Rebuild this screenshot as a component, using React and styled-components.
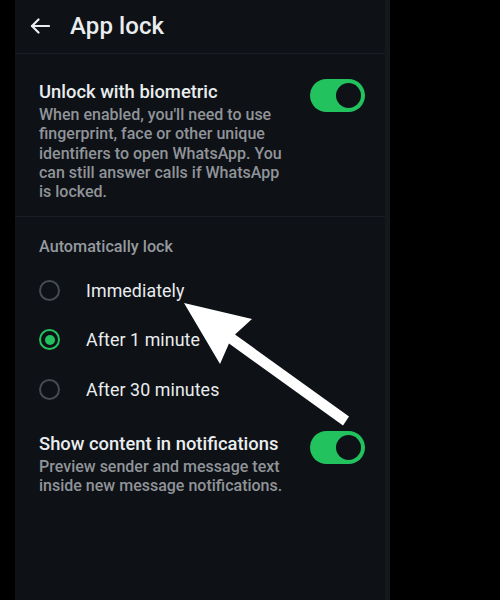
import React, {useState} from 'react'
import styled, {createGlobalStyle} from 'styled-components'

const GlobalStyle = createGlobalStyle`
    html, body {
        margin: 0;
        padding: 0;
        background: #000;
    }
    body {
        font-family: Roboto, "Noto Sans", "Liberation Sans", sans-serif;
        -webkit-font-smoothing: antialiased;
    }
`

const options = ['Immediately', 'After 1 minute', 'After 30 minutes']

function App() {
    const [biometric, setBiometric] = useState(true)
    const [showContent, setShowContent] = useState(true)
    const [lockAfter, setLockAfter] = useState(1)

    return (
        <Page>
            <GlobalStyle />
            <Screen>
                <Header>
                    <BackButton aria-label="Back">
                        <svg width="20" height="16" viewBox="0 0 20 16" fill="none">
                            <path d="M19 8H2" stroke="#e9edef" strokeWidth="2.2" strokeLinecap="round" />
                            <path d="M8.5 1.5L2 8l6.5 6.5" stroke="#e9edef" strokeWidth="2.2" strokeLinecap="round" strokeLinejoin="round" />
                        </svg>
                    </BackButton>
                    <Title>App lock</Title>
                </Header>

                <Section divided>
                    <SettingRow>
                        <SettingText>
                            <SettingTitle>Unlock with biometric</SettingTitle>
                            <SettingDesc>
                                When enabled, you'll need to use fingerprint, face or other unique identifiers to open WhatsApp. You can still answer calls if WhatsApp is locked.
                            </SettingDesc>
                        </SettingText>
                        <Toggle on={biometric} onClick={() => setBiometric(!biometric)} />
                    </SettingRow>
                </Section>

                <Section top={20}>
                    <GroupLabel>Automatically lock</GroupLabel>
                    <RadioList>
                        {options.map((opt, i) => (
                            <RadioRow key={opt} onClick={() => setLockAfter(i)}>
                                <Radio checked={lockAfter === i} />
                                <RadioLabel>{opt}</RadioLabel>
                            </RadioRow>
                        ))}
                    </RadioList>
                    <SettingRow>
                        <SettingText>
                            <SettingTitle>Show content in notifications</SettingTitle>
                            <SettingDesc>
                                Preview sender and message text inside new message notifications.
                            </SettingDesc>
                        </SettingText>
                        <Toggle on={showContent} onClick={() => setShowContent(!showContent)} />
                    </SettingRow>
                </Section>
            </Screen>

            {/* the big pointer arrow drawn over the screenshot */}
            <Pointer width="500" height="600" viewBox="0 0 500 600">
                <polygon
                    points="184,303 252,319 235,334.5 349,416.5 343,425.5 229,343.5 220,364"
                    fill="#ffffff"
                />
            </Pointer>
        </Page>
    )
}

export default App

const Page = styled.div`
    position: relative;
    width: 500px;
    height: 600px;
    overflow: hidden;
    background: #000;
    display: flex;
`

const Screen = styled.div`
    margin-left: 15px;
    width: 370px;
    height: 600px;
    background: #0e1116;
    border-right: 5px solid #14181d;
    display: flex;
    flex-direction: column;
`

const Header = styled.div`
    height: 53px;
    display: flex;
    align-items: center;
    padding-left: 15px;
    gap: 20px;
    border-bottom: 1px solid #1a1e24;
`

const BackButton = styled.div`
    display: flex;
    align-items: center;
    width: 20px;
    height: 16px;
    margin-top: -2px;
    cursor: pointer;
`

const Title = styled.h1`
    margin: 0;
    margin-top: -2px;
    font-size: 24px;
    font-weight: 500;
    color: #e9edef;
    letter-spacing: 0.1px;
`

const Section = styled.div`
    padding: ${props => props.top || 26}px 20px 15px 24px;
    border-bottom: ${props => props.divided ? '1px solid #1a1e24' : 'none'};
`

const SettingRow = styled.div`
    display: flex;
    align-items: flex-start;
    justify-content: space-between;
    gap: 16px;
`

const SettingText = styled.div`
    flex: 1;
    max-width: 248px;
`

const SettingTitle = styled.div`
    font-size: 18.4px;
    line-height: 24px;
    font-weight: 500;
    color: #e9edef;
`

const SettingDesc = styled.div`
    margin-top: 1px;
    font-size: 16px;
    line-height: 19.3px;
    font-weight: 500;
    color: #909499;
`

const Toggle = styled.div`
    flex: none;
    position: relative;
    width: 55px;
    height: 33px;
    margin-top: -1px;
    border-radius: 17px;
    background: ${props => props.on ? '#22c35e' : '#3b4147'};
    cursor: pointer;

    &::after {
        content: '';
        position: absolute;
        top: 4px;
        left: ${props => props.on ? '26px' : '4px'};
        width: 25px;
        height: 25px;
        border-radius: 50%;
        background: #0e1116;
    }
`

const GroupLabel = styled.div`
    font-size: 16.2px;
    line-height: 20px;
    font-weight: 500;
    color: #959a9f;
`

const RadioList = styled.div`
    display: flex;
    flex-direction: column;
    margin: 8px 0 18px;
`

const RadioRow = styled.div`
    height: 49.5px;
    display: flex;
    align-items: center;
    gap: 26px;
    cursor: pointer;
`

const Radio = styled.div`
    flex: none;
    box-sizing: border-box;
    width: 21px;
    height: 21px;
    border-radius: 50%;
    border: 2px solid ${props => props.checked ? '#22c35e' : '#464b51'};
    display: flex;
    align-items: center;
    justify-content: center;

    &::after {
        content: '';
        display: ${props => props.checked ? 'block' : 'none'};
        width: 10px;
        height: 10px;
        border-radius: 50%;
        background: #22c35e;
    }
`

const RadioLabel = styled.span`
    font-size: 17.8px;
    color: #e9edef;
    letter-spacing: 0.1px;
`

const Pointer = styled.svg`
    position: absolute;
    left: 0;
    top: 0;
    pointer-events: none;
`
